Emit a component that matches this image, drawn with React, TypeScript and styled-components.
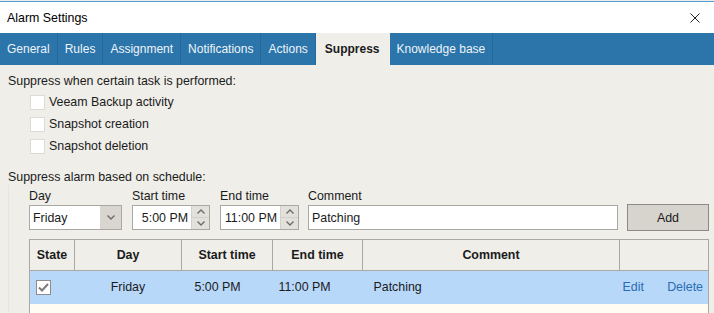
import React from "react";
import styled, { createGlobalStyle } from "styled-components";

const GlobalStyle = createGlobalStyle`
  html, body {
    margin: 0;
    padding: 0;
    background: #efeee9;
  }
  body {
    font-family: "Liberation Sans", Arial, sans-serif;
    font-size: 12.4px;
    color: #1b1b1b;
  }
`;

const Window = styled.div`
  width: 714px;
  height: 313px;
  overflow: hidden;
  display: flex;
  flex-direction: column;
  background: #efeee9;
`;

const TitleBar = styled.div`
  height: 31px;
  margin-top: 1px;
  border-top: 1px solid #4f9bd3;
  background: #fff;
  display: flex;
  align-items: center;
  justify-content: space-between;
  padding: 0 14px 0 7px;
  color: #000;
`;

const CloseBtn = styled.span`
  display: flex;
  width: 10px;
  height: 10px;
`;

const TabBar = styled.div`
  height: 32px;
  background: #2b75aa;
  display: flex;
`;

const Tab = styled.div<{ $active?: boolean }>`
  display: flex;
  align-items: center;
  padding: 0 ${(p) => (p.$active ? "9px" : "7px")};
  border-right: 1px solid ${(p) => (p.$active ? "#efeee9" : "#256899")};
  background: ${(p) => (p.$active ? "#efeee9" : "transparent")};
  color: ${(p) => (p.$active ? "#1b1b1b" : "#eef4f9")};
  font-weight: ${(p) => (p.$active ? 700 : 400)};
  font-size: 12px;
`;

const Body = styled.div`
  flex: 1;
  display: flex;
  flex-direction: column;
  padding: 8px 5px 0 8px;
`;

const Heading = styled.div`
  height: 16px;
  line-height: 16px;
`;

const OptionList = styled.div`
  display: flex;
  flex-direction: column;
  padding: 2px 0 0 22px;
`;

const OptionRow = styled.label`
  height: 22px;
  display: flex;
  align-items: center;
  gap: 4px;
`;

const Box = styled.span`
  width: 15px;
  height: 15px;
  box-sizing: border-box;
  border: 1px solid #dcdbd6;
  background: #fff;
`;

const ScheduleHeading = styled(Heading)`
  margin-top: 12px;
`;

const Schedule = styled.div`
  flex: 1;
  display: flex;
  flex-direction: column;
  padding-left: 20px;
  border-left: 1px solid #e6e5e0;
`;

const FormRow = styled.div`
  display: flex;
  align-items: flex-end;
  margin-top: 3px;
`;

const Field = styled.div<{ $w: number; $gap?: number }>`
  width: ${(p) => p.$w}px;
  margin-right: ${(p) => p.$gap ?? 10}px;
  display: flex;
  flex-direction: column;
`;

const FieldLabel = styled.div`
  height: 16px;
  line-height: 16px;
  margin-bottom: 1px;
`;

const InputBox = styled.div`
  height: 25px;
  box-sizing: border-box;
  border: 1px solid #a9a8a3;
  background: #fff;
  display: flex;
  align-items: stretch;
`;

const InputText = styled.div<{ $align?: string }>`
  flex: 1;
  display: flex;
  align-items: center;
  justify-content: ${(p) => p.$align ?? "flex-start"};
  padding: 0 3px;
`;

const DropArrow = styled.div`
  width: 21px;
  background: #d8d6cf;
  display: flex;
  align-items: center;
  justify-content: center;
`;

const Spinner = styled.div`
  width: 17px;
  display: flex;
  flex-direction: column;
  background: #e3e1dc;
  border-left: 1px solid #d2d0ca;
`;

const SpinHalf = styled.div`
  flex: 1;
  display: flex;
  align-items: center;
  justify-content: center;
  & + & {
    border-top: 1px solid #d2d0ca;
  }
`;

const AddButton = styled.button`
  width: 82px;
  height: 27px;
  margin-bottom: -1px;
  box-sizing: border-box;
  border: 1px solid #8b8a86;
  background: #d7d4cd;
  font-family: inherit;
  font-size: inherit;
  color: #1b1b1b;
  padding: 0;
`;

const TableWrap = styled.div`
  flex: 1;
  margin-top: 9px;
  border: 1px solid #a9a8a3;
  border-bottom: 0;
  background: #fffdf3;
  overflow: hidden;
`;

const Grid = styled.table`
  width: 100%;
  border-collapse: collapse;
  table-layout: fixed;
`;

const Th = styled.th<{ $w?: number }>`
  width: ${(p) => (p.$w ? `${p.$w}px` : "auto")};
  height: 30px;
  padding: 0;
  background: #efeee9;
  border-right: 1px solid #a9a8a3;
  border-bottom: 1px solid #a9a8a3;
  font-weight: 700;
  font-size: 12.4px;
  color: #1b1b1b;
  text-align: center;
  &:last-child {
    border-right: 0;
  }
`;

const Tr = styled.tr`
  background: #b8d8fa;
  height: 33px;
`;

const Td = styled.td<{ $align?: string; $pad?: number }>`
  padding: 0 0 0 ${(p) => p.$pad ?? 0}px;
  text-align: ${(p) => p.$align ?? "left"};
  font-size: 12.4px;
  color: #1b1b1b;
`;

const LinkText = styled.span`
  color: #2a6db3;
`;

const Actions = styled.div`
  display: flex;
  justify-content: space-between;
  padding: 0 5px 0 3px;
`;

const RowCheck = styled.span`
  width: 15px;
  height: 15px;
  box-sizing: border-box;
  border: 1px solid #8c8c8c;
  background: #fff;
  display: flex;
  align-items: center;
  justify-content: center;
`;

const Chevron = ({ up }: { up?: boolean }) => (
  <svg width="8" height="5" viewBox="0 0 8 5">
    <path
      d={up ? "M0.5 4.5 L4 1 L7.5 4.5" : "M0.5 0.5 L4 4 L7.5 0.5"}
      fill="none"
      stroke="#6d6c68"
      strokeWidth="1.4"
    />
  </svg>
);

const options = ["Veeam Backup activity", "Snapshot creation", "Snapshot deletion"];
const tabs = ["General", "Rules", "Assignment", "Notifications", "Actions", "Suppress", "Knowledge base"];

const TimeField = ({ value }: { value: string }) => (
  <InputBox>
    <InputText $align="flex-end">{value}</InputText>
    <Spinner>
      <SpinHalf>
        <Chevron up />
      </SpinHalf>
      <SpinHalf>
        <Chevron />
      </SpinHalf>
    </Spinner>
  </InputBox>
);

export default function App() {
  return (
    <Window>
      <GlobalStyle />
      <TitleBar>
        <span>Alarm Settings</span>
        <CloseBtn>
          <svg width="10" height="10" viewBox="0 0 10 10">
            <path d="M0.5 0.5 L9.5 9.5 M9.5 0.5 L0.5 9.5" stroke="#222" strokeWidth="1" />
          </svg>
        </CloseBtn>
      </TitleBar>
      <TabBar>
        {tabs.map((t) => (
          <Tab key={t} $active={t === "Suppress"}>
            {t}
          </Tab>
        ))}
      </TabBar>
      <Body>
        <Heading>Suppress when certain task is performed:</Heading>
        <OptionList>
          {options.map((o) => (
            <OptionRow key={o}>
              <Box />
              {o}
            </OptionRow>
          ))}
        </OptionList>
        <ScheduleHeading>Suppress alarm based on schedule:</ScheduleHeading>
        <Schedule>
          <FormRow>
            <Field $w={93} $gap={10}>
              <FieldLabel>Day</FieldLabel>
              <InputBox>
                <InputText>Friday</InputText>
                <DropArrow>
                  <Chevron />
                </DropArrow>
              </InputBox>
            </Field>
            <Field $w={78} $gap={10}>
              <FieldLabel>Start time</FieldLabel>
              <TimeField value="5:00 PM" />
            </Field>
            <Field $w={79} $gap={9}>
              <FieldLabel>End time</FieldLabel>
              <TimeField value="11:00 PM" />
            </Field>
            <Field $w={310} $gap={9}>
              <FieldLabel>Comment</FieldLabel>
              <InputBox>
                <InputText>Patching</InputText>
              </InputBox>
            </Field>
            <AddButton>Add</AddButton>
          </FormRow>
          <TableWrap>
            <Grid>
              <thead>
                <tr>
                  <Th $w={44}>State</Th>
                  <Th $w={106}>Day</Th>
                  <Th $w={90}>Start time</Th>
                  <Th $w={89}>End time</Th>
                  <Th $w={256}>Comment</Th>
                  <Th></Th>
                </tr>
              </thead>
              <tbody>
                <Tr>
                  <Td $pad={6}>
                    <RowCheck>
                      <svg width="11" height="9" viewBox="0 0 11 9">
                        <path d="M1 4.5 L4 7.5 L10 1" fill="none" stroke="#7b7b7b" strokeWidth="2" />
                      </svg>
                    </RowCheck>
                  </Td>
                  <Td $align="center">Friday</Td>
                  <Td $pad={13}>5:00 PM</Td>
                  <Td $pad={6}>11:00 PM</Td>
                  <Td $pad={11}>Patching</Td>
                  <Td>
                    <Actions>
                      <LinkText>Edit</LinkText>
                      <LinkText>Delete</LinkText>
                    </Actions>
                  </Td>
                </Tr>
              </tbody>
            </Grid>
          </TableWrap>
        </Schedule>
      </Body>
    </Window>
  );
}
